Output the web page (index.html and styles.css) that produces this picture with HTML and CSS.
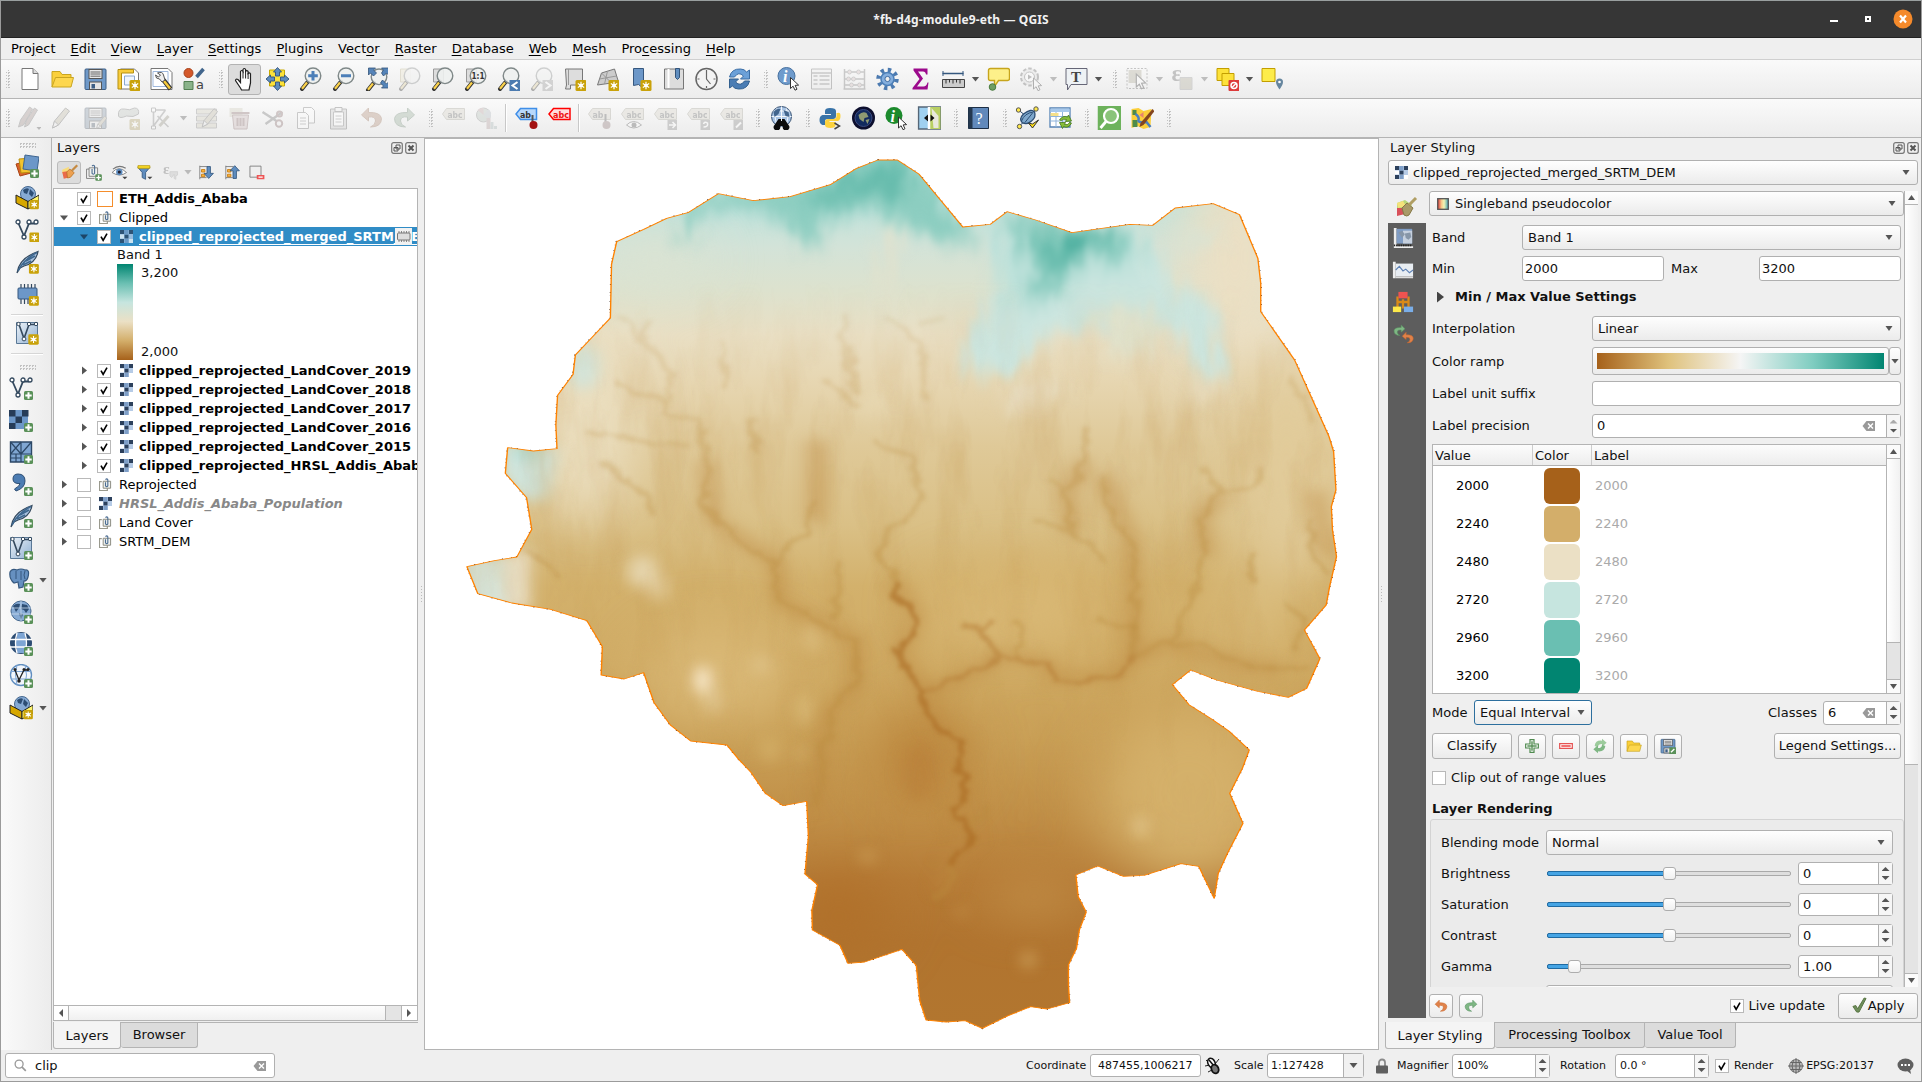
FILE: index.html
```html
<!DOCTYPE html>
<html lang="en">
<head>
<meta charset="utf-8">
<title>*fb-d4g-module9-eth — QGIS</title>
<link rel="stylesheet" href="styles.css">
</head>
<body>
<svg class="defs" width="0" height="0">
  <defs>
    <linearGradient id="blueG" x1="0" y1="0" x2="1" y2="1"><stop offset="0" stop-color="#eef3f8"/><stop offset="1" stop-color="#8fb0d3"/></linearGradient>
    <linearGradient id="spec" x1="0" x2="1"><stop offset="0" stop-color="#d7383b"/><stop offset=".35" stop-color="#f8c88a"/><stop offset=".6" stop-color="#f4f6b4"/><stop offset="1" stop-color="#3f9fb5"/></linearGradient>
    <g id="star"><rect width="11" height="11" rx="1.5" fill="#c9a20a"/><path d="M5.5 1.8v7.4M2.3 3.6l6.4 3.8M8.7 3.6L2.3 7.4" stroke="#fff" stroke-width="1.2"/><circle cx="5.5" cy="5.5" r="1.8" fill="#fff"/></g>
    <g id="plus"><rect width="9" height="9" rx="1.5" fill="#5a9159"/><path d="M4.5 1.3v6.4M1.3 4.500h6.400" stroke="#fff" stroke-width="2"/></g>
    <g id="lens"><path d="M9.500 14.500L3.500 22" stroke="#333" stroke-width="4" stroke-linecap="round"/><path d="M8.500 15.500L3.500 21.700" stroke="#fbd24c" stroke-width="2.200"/><circle cx="14.500" cy="8.800" r="7.800" fill="#eef1f0" fill-opacity=".9" stroke="#7f8888" stroke-width="1.400"/></g>
    <g id="cursor"><path d="M0 0l0 11 2.600-2.300 1.900 4 2-1-1.900-3.800 3.500-.300z" fill="#fff" stroke="#333" stroke-width="1"/></g>
    <g id="globe"><circle cx="11" cy="11" r="10" fill="#86aad4" stroke="#45688f"/><path d="M3 6q3-3 7-2l-1 4-3 4zM12 4l5 1 2 4-3 4-2-3-3-1zM9 13l4 1-2 6z" fill="#2d4e74"/></g>
    <g id="lbl"><path d="M1 8l4-5.500h18v11H5z" fill="#d9d3b4" stroke="#a8a285"/></g>
    <g id="vee"><path d="M3.500 5.500L9 18 14 5.500h6" fill="none" stroke="#34495e" stroke-width="1.800"/><g fill="#fff" stroke="#34495e" stroke-width="1.300"><circle cx="3" cy="4" r="2"/><circle cx="9" cy="19" r="2"/><circle cx="14" cy="4" r="2"/><circle cx="21" cy="4" r="2"/></g></g>
    <g id="hand"><path d="M8 21L3 13.500q0-2 2.500-1l2.500 3V4.500q1.300-2 2.500 0V2.500q1.300-2 2.600 0v2q1.200-1.600 2.500 0v2q1.200-1.300 2.400.300V16l-1.500 7H9z" fill="#fff" stroke="#222" stroke-width="1.200"/><path d="M10.500 4.500v7M13.100 4.500v7M15.600 6v6" stroke="#222"/></g>
    <g id="boxglobe"><circle cx="13" cy="8" r="7.500" fill="#86aad4" stroke="#45688f"/><path d="M8 4q4-3 6-1l-2 5-3-1zM15 3l4 4-2 4-3-3z" fill="#2d4e74"/><path d="M1 9l12 6.500V23L1 17z" fill="#d7a800" stroke="#222"/><path d="M13 15.500L24 9v8l-11 6z" fill="#fdf46a" stroke="#222"/></g>
    <g id="feather"><path d="M2 23Q4 8 23 1.500 21 13 9 16L5 18 2 23" fill="#a9c2df" stroke="#34495e" stroke-width="1.200"/><path d="M3 21Q9 9 22 2.500M8 15L16 11M11 11l9-5" fill="none" stroke="#3f688f" stroke-width="1.600"/></g>
    <g id="undo"><path d="M9 2L2 9l7 6v-4q7-1 7 4 0 4-5 6 11 0 11-8.500Q21 6 9 6.500z" fill="#e0824a" stroke="#c9672c"/></g>
    <g id="redo"><path d="M15 2l7 7-7 6v-4q-7-1-7 4 0 4 5 6Q2 21 2 12.500 3 6 15 6.500z" fill="#7fb784" stroke="#569060"/></g>
    <g id="pencil"><path d="M2 22l2-7L15 2l4 3L8 19z" fill="#c8b98a" stroke="#666"/><path d="M2 22l2-7 4 4z" fill="#eee" stroke="#666"/></g>
    <g id="folder"><path d="M1.500 20V4.500h8l2 3h9v3.500" fill="#fbd03b" stroke="#c9a520"/><path d="M1.500 20L5 10.500h18L20.500 20z" fill="#fdd74f" stroke="#c9a520"/></g>
    <g id="disk"><rect x="1.500" y="2" width="21" height="20.500" rx="1" fill="#6f99c8" stroke="#3d5f86"/><rect x="5.500" y="2.500" width="13" height="9" fill="#e8e8e8" stroke="#555"/><path d="M7 5h10M7 7h10M7 9.200h10" stroke="#666"/><rect x="6" y="15" width="12" height="7.500" fill="#e5e5e5" stroke="#555"/><rect x="8" y="17" width="3.500" height="4.500" fill="#3d5f86"/></g>
    <g id="rast"><path fill="#b6cbe6" d="M0 0h13v13H0z"/><path fill="#2c405c" d="M0 0h4v4H0zM9 0h4v4H9zM4.500 4.500h4v4h-4zM0 9h4v4H0z"/><path fill="#fff" d="M0 4.500h4v4H0zM9 9h4v4H9z"/><path fill="#7f9fc8" d="M4 0h4.500v4.500H4zM4.500 9h4v4h-4z"/></g>
    <g id="grp"><path d="M3 4H.5v9.500H9V11" fill="none" stroke="#9a9a8e" stroke-width="1.300"/><path d="M4.500 3.500h8V11h-8z" fill="#eff1ee" stroke="#85857a"/><path d="M7 4.500v4q1.500 1.600 2.500 0V1.800Q8.500.200 7 1.800" fill="none" stroke="#4c6d92" stroke-width="1.200"/></g>
    <symbol id="i-new" viewBox="0 0 24 24"><path d="M4.500 1.500h11l5 5v16h-16z" fill="#fff" stroke="#777"/><path d="M15.500 1.500v5h5" fill="#ddd" stroke="#777"/></symbol>
    <symbol id="i-open" viewBox="0 0 24 24"><use href="#folder"/></symbol>
    <symbol id="i-save" viewBox="0 0 24 24"><use href="#disk"/></symbol>
    <symbol id="i-layout" viewBox="0 0 24 24"><path d="M4 2h14l4 4v16H4z" fill="#fff" stroke="#777"/><path d="M1.500 2.500H17V6H5v16H1.500z" fill="#f8cc3c" stroke="#b38f12"/><path d="M8 9h10v9H8z" fill="#eef5ff" stroke="#8ba8d0"/><use href="#star" x="13" y="13"/></symbol>
    <symbol id="i-mgr" viewBox="0 0 24 24"><path d="M1.500 1.500h17l4 4v17h-21z" fill="#fff" stroke="#777"/><path d="M3.500 4.500h15v15h-15z" fill="none" stroke="#9fb8dc"/><path d="M14 13l7 9" stroke="#333" stroke-width="4.500"/><path d="M14.500 14l6 7.500" stroke="#f8cc3c" stroke-width="2.500"/><path d="M8 6q5-2 6 2l1.500 5-3 2-2.500-3q-4 0-4-4l3 2 2-2z" fill="#eee" stroke="#555"/></symbol>
    <symbol id="i-style" viewBox="0 0 24 24"><circle cx="6" cy="6" r="4.500" fill="#d4582a" stroke="#a8421b"/><path d="M14 10l7-8" stroke="#41658c" stroke-width="3.500"/><path d="M1.500 14.500h9v8h-9z" fill="#8ab38a" stroke="#527f52"/><text x="13.500" y="22" font-size="13" fill="#444">a</text></symbol>
    <symbol id="i-hand" viewBox="0 0 24 24"><use href="#hand"/></symbol>
    <symbol id="i-pan" viewBox="0 0 24 24"><path d="M4 3h15v16H4z" fill="#fde23a" stroke="#c7a900"/><path d="M12 .5L16 5h-2v4h-4V5H8zM12 23.500L8 19h2v-4h4v4h2zM.5 12L5 8v2h4v4H5v2zM23.500 12L19 16v-2h-4v-4h4V8z" fill="#5f8dbf" stroke="#33547a" stroke-width=".9"/></symbol>
    <symbol id="i-zin" viewBox="0 0 24 24"><use href="#lens"/><path d="M14.500 4v9.600M9.700 8.800h9.600" stroke="#4c7fb8" stroke-width="3"/></symbol>
    <symbol id="i-zout" viewBox="0 0 24 24"><use href="#lens"/><path d="M9.500 8.800h10" stroke="#4c7fb8" stroke-width="3"/></symbol>
    <symbol id="i-zfull" viewBox="0 0 24 24"><use href="#lens" transform="translate(0 1)"/><path d="M4 1h7L9 3l3 3-3 3-3-3-2 2zM24 1h-7l2 2-2 3 2 3 3-3 2 2zM24 21h-7l2-2-3-3 2-3 4 4 2-2z" fill="#5584b8" stroke="#33547a" stroke-width=".8"/></symbol>
    <symbol id="i-zsel" viewBox="0 0 24 24"><path d="M3 2h10v13H3z" fill="#f3e4a4" stroke="#cab45c"/><use href="#lens"/></symbol>
    <symbol id="i-zlay" viewBox="0 0 24 24"><path d="M3 2h10v13H3z" fill="#ddd" stroke="#999"/><use href="#lens"/></symbol>
    <symbol id="i-z11" viewBox="0 0 24 24"><path d="M3 2h10v13H3z" fill="#ddd" stroke="#999"/><use href="#lens"/><text x="8" y="12" font-size="9" font-weight="bold" textLength="13" lengthAdjust="spacingAndGlyphs" fill="#333">1:1</text></symbol>
    <symbol id="i-zlast" viewBox="0 0 24 24"><use href="#lens"/><path d="M13 13h11v11H13z" fill="#4c7bb0"/><path d="M21 15l-5 3.500 5 3.500" fill="none" stroke="#fff" stroke-width="2"/></symbol>
    <symbol id="i-znext" viewBox="0 0 24 24"><use href="#lens"/><path d="M13 13h11v11H13z" fill="#999"/><path d="M16 15l5 3.500-5 3.500" fill="none" stroke="#fff" stroke-width="2"/></symbol>
    <symbol id="i-map" viewBox="0 0 24 24"><path d="M3 2h17v16H8v4H3l1-4z" fill="#ddd" stroke="#777"/><path d="M6 2v16" stroke="#999"/><use href="#star" x="13" y="13"/></symbol>
    <symbol id="i-3d" viewBox="0 0 24 24"><path d="M6 6l13-4 4 13-21 3z" fill="#ccc" stroke="#777"/><path d="M12 4L9 17M4 12l17-3M6 6l11 11" stroke="#999" fill="none"/><use href="#star" x="13" y="13"/></symbol>
    <symbol id="i-bm" viewBox="0 0 24 24"><path d="M5 1.500h10v20l-5-4-5 1z" fill="#6c97c8" stroke="#36577e"/><use href="#star" x="12" y="13"/></symbol>
    <symbol id="i-bms" viewBox="0 0 24 24"><path d="M3 2h19v20H3z" fill="#ddd" stroke="#777"/><path d="M7 2v19" stroke="#fff" stroke-width="2"/><path d="M14 1.500h4v9l-2 2-2-2z" fill="#5f8dbf" stroke="#33547a"/></symbol>
    <symbol id="i-clock" viewBox="0 0 24 24"><circle cx="12" cy="12" r="10.500" fill="#f3f3f3" stroke="#666" stroke-width="1.500"/><path d="M12 4v8l4 5M12 3v2M12 19v2M3 12h2M19 12h2" fill="none" stroke="#666" stroke-width="1.200"/></symbol>
    <symbol id="i-ref" viewBox="0 0 24 24"><path d="M2 10Q4 1.500 13 2q4 0 6 3l3-2v9h-9l3-3q-5-5-9 1z" fill="#6ba0d8" stroke="#3c6ea5"/><path d="M22 14q-2 8.500-11 8-4 0-6-3l-3 2v-9h9l-3 3q5 5 9-1z" fill="#4b7db4" stroke="#33608f"/></symbol>
    <symbol id="i-info" viewBox="0 0 24 24"><circle cx="10" cy="9" r="8.500" fill="#6f9bcc" stroke="#47719f"/><text x="6.500" y="15" font-size="16" font-style="italic" font-weight="bold" font-family="Liberation Serif,serif" fill="#fff">i</text><use href="#cursor" x="14" y="10.500"/></symbol>
    <symbol id="i-tab" viewBox="0 0 24 24"><path d="M2 2h20v20H2z" fill="#eee" stroke="#666"/><path d="M2 6h20M4 9h4M10 9h10M4 13h4M10 13h10M4 17h4M10 17h10" stroke="#777" stroke-width="1.500"/></symbol>
    <symbol id="i-aba" viewBox="0 0 24 24"><path d="M2 22V2M22 2v20M1 22h22M2 5h20M2 12h20M2 18h20" stroke="#777" stroke-width="1.500"/><g fill="#e9b6b6" stroke="#888"><circle cx="7" cy="5" r="2"/><circle cx="16" cy="5" r="2"/><circle cx="6" cy="12" r="2"/><circle cx="11" cy="12" r="2"/><circle cx="9" cy="18" r="2"/><circle cx="17" cy="18" r="2"/></g></symbol>
    <symbol id="i-gear" viewBox="0 0 24 24"><circle cx="12" cy="12" r="9" fill="none" stroke="#4c7ab0" stroke-width="4.500" stroke-dasharray="3.300 3.770"/><circle cx="12" cy="12" r="6.500" fill="#84aedd" stroke="#4c7fb8" stroke-width="1.500"/><circle cx="12" cy="12" r="2.600" fill="#eee" stroke="#3f6ca3"/></symbol>
    <symbol id="i-sum" viewBox="0 0 24 24"><path d="M5 1.500h14v6h-1.500q-.5-3-3-3h-5l5 7-6 8h6.500q3 0 4-4H20l-1 7H4v-1.500l7-9-6-8.500z" fill="#9c0a8c"/></symbol>
    <symbol id="i-rul" viewBox="0 0 24 24"><path d="M1 6.500h21" stroke="#34577e" stroke-width="1.600"/><path d="M1.500 4v5M21.500 4v5" stroke="#34577e"/><path d="M1 12.500h22v8H1z" fill="#ccc" stroke="#444"/><path d="M4.500 12.500v4M8 12.500v3M11.500 12.500v4M15 12.500v3M18.500 12.500v4" stroke="#333"/></symbol>
    <symbol id="i-tip" viewBox="0 0 24 24"><path d="M4 1.500h17q2 0 2 2v8q0 2-2 2h-9l-4 6v-6H4q-2 0-2-2v-8q0-2 2-2z" fill="#fdf08a" stroke="#c7a51c" stroke-width="1.400"/><circle cx="6" cy="20" r="3.300" fill="#6e9d62" stroke="#497a3f"/></symbol>
    <symbol id="i-act" viewBox="0 0 24 24"><circle cx="10" cy="10" r="8.500" fill="#ddd" stroke="#666" stroke-width="2" stroke-dasharray="3.500 2"/><circle cx="10" cy="10" r="5" fill="#fff" stroke="#666"/><path d="M8.500 7.500v5l4-2.500z" fill="#555"/><use href="#cursor" x="14" y="11"/></symbol>
    <symbol id="i-txt" viewBox="0 0 24 24"><path d="M1.500 1.500h21v16h-16L3 23v-5.500H1.500z" fill="#eef2f5" stroke="#667"/><text x="6.500" y="15" font-size="15" font-family="Liberation Serif,serif" font-weight="bold" fill="#444">T</text></symbol>
    <symbol id="i-sel" viewBox="0 0 24 24"><path d="M1.500 1.500h20v20h-20z" fill="none" stroke="#666" stroke-dasharray="2 1.500"/><path d="M3 3h13v13H3z" fill="#b5ab7c"/><use href="#cursor" x="12" y="8" transform="translate(-3 -2) scale(1.150)"/></symbol>
    <symbol id="i-eps" viewBox="0 0 24 24"><text x="1" y="14" font-size="24" font-weight="bold" font-family="Liberation Serif,serif" fill="#666">ε</text><path d="M9.500 10.500h12v12h-12z" fill="#b5ab7c" stroke="#999"/></symbol>
    <symbol id="i-des" viewBox="0 0 24 24"><g fill="#fde23a" stroke="#c39e00"><path d="M1.500 1.500h12v12h-12z"/><path d="M6.500 6.500h12v12h-12z"/></g><rect x="13" y="13" width="11" height="11" rx="1" fill="#dd3b3b"/><circle cx="18.500" cy="18.500" r="3" fill="none" stroke="#fff" stroke-width="1.500"/><path d="M16.500 20.500l4-4" stroke="#fff" stroke-width="1.500"/></symbol>
    <symbol id="i-loc" viewBox="0 0 24 24"><path d="M1.500 1.500h13v13h-13z" fill="#fdec4b" stroke="#c39e00"/><path d="M19 22.500q-3.500-5-3.500-7.500a3.500 3.500 0 017 0q0 2.500-3.500 7.500z" fill="#66869f"/><circle cx="19" cy="15" r="1.300" fill="#fff"/></symbol>
    <symbol id="i-pens" viewBox="0 0 24 24"><path d="M1 21l2-7L12 1l3 2L6 19zM7 21l2-7L17 2l3 2-9 15z" fill="#b58a80" stroke="#777"/><path d="M19 21h5l-2.500 3z" fill="#555"/></symbol>
    <symbol id="i-pen" viewBox="0 0 24 24"><use href="#pencil"/></symbol>
    <symbol id="i-sed" viewBox="0 0 24 24"><use href="#disk"/><use href="#pencil" transform="translate(12 9) scale(.6)"/></symbol>
    <symbol id="i-poly" viewBox="0 0 24 24"><path d="M2 10q-1-8 6-7 5 2 10-1 5 0 4 6-5 4-12 2-7 3-8 0z" fill="#b8c8b8" stroke="#777"/><use href="#star" x="13" y="13"/></symbol>
    <symbol id="i-vert" viewBox="0 0 24 24"><path d="M4 22V4M4 4h12M4 20L16 4M8 10l11 11" stroke="#888" stroke-width="1.600"/><path d="M2 2h4v4H2zM2 20h4v3H2z" fill="#fff" stroke="#777"/><path d="M10 20l9-10" stroke="#9b9470" stroke-width="3"/></symbol>
    <symbol id="i-att" viewBox="0 0 24 24"><path d="M2 3h20v5H2zM2 10h20v5H2zM2 17h20v5H2z" fill="#d6cfa5" stroke="#888"/><use href="#pencil" transform="translate(6 1) scale(.9)"/></symbol>
    <symbol id="i-trash" viewBox="0 0 24 24"><path d="M2 2h13v9H2z" fill="#d6cfa5"/><path d="M5 9h16l-1.500 14h-13z" fill="#e3b4b4" stroke="#a66"/><path d="M4 7h18M10 12v8M13 12v8M16 12v8" stroke="#a66" stroke-width="2"/></symbol>
    <symbol id="i-cut" viewBox="0 0 24 24"><path d="M2 6l14 9M5 18L22 6" stroke="#777" stroke-width="2.500"/><circle cx="18.500" cy="17.500" r="3.200" fill="none" stroke="#a66" stroke-width="2"/><circle cx="19" cy="8" r="2.500" fill="none" stroke="#a66" stroke-width="2"/></symbol>
    <symbol id="i-copy" viewBox="0 0 24 24"><path d="M10 1.500h8l3 3V17H10z" fill="#fff" stroke="#777"/><path d="M4 6.500h8l3 3V22.500H4z" fill="#fff" stroke="#777"/><path d="M6.500 12h6M6.500 15h6M6.500 18h6" stroke="#888"/></symbol>
    <symbol id="i-paste" viewBox="0 0 24 24"><path d="M4 3h16v20H4z" fill="#ccc" stroke="#666"/><path d="M7 6h10v14H7z" fill="#fff" stroke="#777"/><path d="M9 10h6M9 13h6M9 16h6" stroke="#888"/><path d="M8.500 1.500h7v4h-7z" fill="#eee" stroke="#666"/></symbol>
    <symbol id="i-undo" viewBox="0 0 24 24"><use href="#undo"/></symbol>
    <symbol id="i-redo" viewBox="0 0 24 24"><use href="#redo"/></symbol>
    <symbol id="i-lab" viewBox="0 0 24 24"><use href="#lbl"/><text x="6" y="12" font-size="9" font-weight="bold" textLength="15" lengthAdjust="spacingAndGlyphs" fill="#666">abc</text></symbol>
    <symbol id="i-dia" viewBox="0 0 24 24"><circle cx="9" cy="9" r="7" fill="#a9c5b0" stroke="#888"/><path d="M9 9L3 4a7 7 0 016-2z" fill="#d99"/><path d="M9 9l5-6a7 7 0 011 10z" fill="#abc"/><path d="M12 12h4v11h-4z" fill="#c99"/><path d="M16 16h3v7h-3zM19.500 20h3v3h-3z" fill="#9bb"/></symbol>
    <symbol id="i-lpin" viewBox="0 0 24 24"><path d="M1.500 8L6 2.500h16v11H6z" fill="#b8d8fb" stroke="#3f8ee8" stroke-width="1.500"/><text x="5.500" y="12" font-size="9.500" font-weight="bold" textLength="11" lengthAdjust="spacingAndGlyphs" fill="#333">ab</text><path d="M18 9v7" stroke="#555" stroke-width="2"/><circle cx="19" cy="19" r="4" fill="#a31212"/></symbol>
    <symbol id="i-lred" viewBox="0 0 24 24"><path d="M1.500 8L6 2.500h16.500v11H6z" fill="#fdd" stroke="#f00" stroke-width="1.500"/><text x="5.500" y="12" font-size="9.500" font-weight="bold" textLength="16" lengthAdjust="spacingAndGlyphs" fill="#e11">abc</text></symbol>
    <symbol id="i-lpg" viewBox="0 0 24 24"><use href="#lbl"/><text x="5" y="12" font-size="9" font-weight="bold" textLength="11" lengthAdjust="spacingAndGlyphs" fill="#666">ab</text><path d="M18 8v8" stroke="#555" stroke-width="2"/><circle cx="19" cy="19" r="4" fill="#a87070"/></symbol>
    <symbol id="i-leye" viewBox="0 0 24 24"><use href="#lbl"/><text x="6" y="12" font-size="9" font-weight="bold" textLength="15" lengthAdjust="spacingAndGlyphs" fill="#666">abc</text><path d="M6 19q7-7 15 0-8 6-15 0z" fill="#fff" stroke="#555"/><circle cx="13.500" cy="19" r="2.500" fill="#555"/></symbol>
    <symbol id="i-lmov" viewBox="0 0 24 24"><use href="#lbl"/><text x="6" y="12" font-size="9" font-weight="bold" textLength="15" lengthAdjust="spacingAndGlyphs" fill="#666">abc</text><path d="M14 14h10v10H14z" fill="#888"/><path d="M15.500 19h6M19 16l3 3-3 3" stroke="#fff" stroke-width="1.500" fill="none"/></symbol>
    <symbol id="i-lrot" viewBox="0 0 24 24"><use href="#lbl"/><text x="6" y="12" font-size="9" font-weight="bold" textLength="15" lengthAdjust="spacingAndGlyphs" fill="#666">abc</text><path d="M14 14h10v10H14z" fill="#888"/><path d="M17 21q5 0 4-4-3-2-4 1" stroke="#fff" stroke-width="1.500" fill="none"/></symbol>
    <symbol id="i-ledt" viewBox="0 0 24 24"><use href="#lbl"/><text x="6" y="12" font-size="9" font-weight="bold" textLength="15" lengthAdjust="spacingAndGlyphs" fill="#666">abc</text><path d="M14 14h10v10H14z" fill="#888"/><path d="M16.500 21.500l5-5" stroke="#fff" stroke-width="2"/></symbol>
    <symbol id="i-msrch" viewBox="0 0 24 24"><circle cx="12" cy="10.500" r="10" fill="#a9c4e4" stroke="#344f70"/><path d="M12 .5v20M2 10.500h20M4 5h16M7 2.500q-3 8 0 16M17 2.500q3 8 0 16" stroke="#f3f7fc" fill="none"/><path d="M4 6q3-4 7-3l-2 5-4 3zM14 4l5 2 1 5-4-1z" fill="#42658d"/><path d="M9 13h2.500v2h1V13H15l4 6a3.300 3.300 0 11-5.500 1h-3a3.300 3.300 0 11-5.500-1z" fill="#0b0b0b"/></symbol>
    <symbol id="i-py" viewBox="0 0 24 24"><path d="M11.500 2q-5 0-5 3v3h6v1H4q-3 1-3 5t3 5h2.500v-4q0-2 3-2h5q3 0 3-3V5q0-3-6-3z" fill="#3973a8"/><path d="M12 22q5 0 5-3v-3h-6v-1h8.500q2.500-1 2.500-5t-3-3h-1v3q0 3-3 3h-5q-3.500 0-3.500 3v3q0 3 5.500 3z" fill="#fcd23e"/><path d="M16 17l5 3-5 3" fill="none" stroke="#444" stroke-width="1.500"/></symbol>
    <symbol id="i-earth" viewBox="0 0 24 24"><circle cx="12" cy="12" r="11.500" fill="#0d0f2e"/><circle cx="12" cy="12" r="8.500" fill="#122a5e" stroke="#3b4a80"/><path d="M7 9q4-4 8-2l2 4-4 1-1 4-4-3zM14 14l4-1-2 5z" fill="#8f9a72"/></symbol>
    <symbol id="i-ginf" viewBox="0 0 24 24"><circle cx="9.500" cy="9.500" r="8.500" fill="#1c8a2c"/><text x="6" y="15.500" font-size="16" font-style="italic" font-weight="bold" font-family="Liberation Serif,serif" fill="#fff">i</text><use href="#cursor" x="14" y="11"/></symbol>
    <symbol id="i-swipe" viewBox="0 0 24 24"><path d="M1 1h22v22H1z" fill="#9fd0f0" stroke="#567" stroke-width="1.500"/><path d="M12 1h11v22H12z" fill="#b8cf63"/><path d="M14 2l7 8v12h-5z" fill="#e8e8dc"/><path d="M11.500 1v22" stroke="#fff" stroke-width="2.500"/><path d="M10.500 8.500v7L6.500 12zM13 8.500v7l4-3.500z" fill="#111"/></symbol>
    <symbol id="i-help" viewBox="0 0 24 24"><path d="M2 1.500h20v21H2z" fill="#6189bb" stroke="#1d2f45"/><path d="M2 1.500h4v21H2z" fill="#24384f"/><text x="9" y="18" font-size="16" font-family="Liberation Serif,serif" fill="#fff">?</text></symbol>
    <symbol id="i-topo" viewBox="0 0 24 24"><path d="M8 8q8-6 11-2 2 5-3 9-4 4-9 2-4-4 1-9z" fill="#7ea7cc" stroke="#2d4e74" stroke-width="1.300"/><path d="M6 15q3-8 12-9M9 17l8-10M3 4l5 4M20 3l-2 3M4 20l4-4" stroke="#2d4e74" fill="none"/><g fill="#ffe84a" stroke="#555"><circle cx="3" cy="4" r="2.200"/><circle cx="20.500" cy="3" r="2.200"/><circle cx="4" cy="20.500" r="2.200"/></g><path d="M13 17l4 5 6-8-6 4z" fill="#ffe01a" stroke="#333"/></symbol>
    <symbol id="i-tref" viewBox="0 0 24 24"><path d="M1.500 2h20v19h-20z" fill="#fff" stroke="#5583b5" stroke-width="1.300"/><path d="M2 2.500h19V6H2z" fill="#a8c9ec"/><path d="M2 10.500h19M2 15h19M7.500 6v15M14 6v15" stroke="#8fb4dc"/><path d="M2 7h8v3H2z" fill="#f5e08a"/><path d="M11 14q3-5 8-3l1-2 3 6-6 .500 1-2q-3-1-5 1zM23 17q-3 6-8 3.500l-1 2-3-6h6l-1 2q4 1 5-2z" fill="#86bd3a" stroke="#44771b" stroke-width=".8"/></symbol>
    <symbol id="i-osm" viewBox="0 0 24 24"><path d="M0 0h24v24H0z" fill="#6db25c"/><circle cx="13.500" cy="10" r="7" fill="#8ac47a" stroke="#fff" stroke-width="2.200"/><path d="M8.500 15.500L3 22" stroke="#fff" stroke-width="2.800"/></symbol>
    <symbol id="i-osmd" viewBox="0 0 24 24"><path d="M1 3l7-1 5 3 8-2-1 18-7 2-6-3-6 2z" fill="#fbcf3a"/><path d="M2 4h4v5H2zM2 14h5v7H2z" fill="#4d8b4a"/><path d="M5 8q4 3 3 6t8 2l4 5" stroke="#4a7fc1" stroke-width="2.500" fill="none"/><path d="M9 9l4-3v6z" fill="#e8836f"/><path d="M10 17L22 3l2 2-11 14-4 2z" fill="#84461f"/></symbol>
    <symbol id="i-dsm" viewBox="0 0 24 24"><path d="M1 10l12-3 3 12-11 3z" fill="#d9622a" stroke="#a84414"/><path d="M4 5l13-1 1 14-12 1z" fill="#f3c32e" stroke="#b98e0e"/><path d="M10 1l14 2-2 14-14-2z" fill="#6c97c8" stroke="#3f658f"/><use href="#plus" x="15" y="15"/></symbol>
    <symbol id="i-gpk" viewBox="0 0 24 24"><use href="#boxglobe"/><use href="#star" x="14.500" y="14" transform="translate(2.200 2) scale(.85)"/></symbol>
    <symbol id="i-vnew" viewBox="0 0 24 24"><use href="#vee"/><use href="#star" x="15" y="15" transform="scale(.9) translate(1 1)"/></symbol>
    <symbol id="i-fnew" viewBox="0 0 24 24"><use href="#feather"/><use href="#star" x="15" y="15" transform="scale(.9) translate(.5 .5)"/></symbol>
    <symbol id="i-mem" viewBox="0 0 24 24"><path d="M6 2v20M9.500 2v20M13 2v20M16.500 2v20M20 2v20" stroke="#34495e" stroke-width="1.200"/><rect x="3" y="6" width="19" height="11" rx="1" fill="#6c97c8" stroke="#34577e"/><use href="#star" x="15" y="15" transform="scale(.9) translate(.5 .5)"/></symbol>
    <symbol id="i-virt" viewBox="0 0 24 24"><path d="M1.500 1.500h21v21h-21z" fill="url(#blueG)" stroke="#5a7896"/><path d="M4 3.500L9 17.500 14 3.500h7" fill="none" stroke="#34495e" stroke-width="1.600"/><g fill="#fff" stroke="#34495e"><circle cx="3.500" cy="3" r="1.700"/><circle cx="9" cy="18" r="1.900"/><circle cx="14" cy="3" r="1.700"/><circle cx="21" cy="3" r="1.700"/></g><use href="#star" x="14" y="14" transform="scale(.95)"/></symbol>
    <symbol id="i-virp" viewBox="0 0 24 24"><path d="M1.500 1.500h21v21h-21z" fill="url(#blueG)" stroke="#5a7896"/><path d="M4 3.500L9 17.500 14 3.500h7" fill="none" stroke="#34495e" stroke-width="1.600"/><g fill="#fff" stroke="#34495e"><circle cx="3.500" cy="3" r="1.700"/><circle cx="9" cy="18" r="1.900"/><circle cx="14" cy="3" r="1.700"/><circle cx="21" cy="3" r="1.700"/></g><use href="#plus" x="15" y="15"/></symbol>
    <symbol id="i-vadd" viewBox="0 0 24 24"><use href="#vee"/><use href="#plus" x="15" y="15"/></symbol>
    <symbol id="i-radd" viewBox="0 0 24 24"><path d="M0 2h19v19H0z" fill="#6c97c8"/><path d="M0 2h6.500v6.500H0zM13 2h6.500v6.500H13zM6.500 8.500H13V15H6.500zM0 15h6.500v6H0z" fill="#263c58"/><use href="#plus" x="15" y="15"/></symbol>
    <symbol id="i-mesh" viewBox="0 0 24 24"><path d="M1.500 2h21v20h-21z" fill="#7fa6d2" stroke="#2c4766" stroke-width="1.400"/><path d="M1.500 14h21M12 2v20M1.500 2L12 14M12 2L1.500 14M22.500 2L12 14M7 14v8M2 18h10" stroke="#2c4766" stroke-width="1.200" fill="none"/><use href="#plus" x="15" y="15"/></symbol>
    <symbol id="i-csv" viewBox="0 0 24 24"><path d="M9 2q7 0 7 7 0 7-9 10l-1.500-2Q11 14 11 11.500 4 12 4 7t5-5z" fill="#4c7cb2" stroke="#2d4e74"/><use href="#plus" x="15" y="15"/></symbol>
    <symbol id="i-fadd" viewBox="0 0 24 24"><use href="#feather"/><use href="#plus" x="15" y="15"/></symbol>
    <symbol id="i-pg" viewBox="0 0 24 24"><path d="M1 4q2-4 7-2 4-2 8 0 5-1 3 7-1 4-4 4l-1 6-4 1-1-6-4 1Q0 11 1 4z" fill="#6690c0" stroke="#34577e" stroke-width="1.200"/><path d="M7 3v8M12 3v9M16 3q-2 4 0 8" stroke="#34577e" fill="none"/><use href="#plus" x="15" y="15"/></symbol>
    <symbol id="i-gadd" viewBox="0 0 24 24"><use href="#globe" x="1"/><path d="M2 8h20M2 14h20M12 1v20" stroke="#c8daee" stroke-width=".8"/><use href="#plus" x="15" y="15"/></symbol>
    <symbol id="i-wcs" viewBox="0 0 24 24"><circle cx="12" cy="11" r="11" fill="#2c4c73"/><path d="M8 1h8v6H8zM7 7h10v8H7zM8 15h8v6H8z" fill="#7da5d4"/><path d="M1 7.500h22M1 15h22M8 1q-3 10 0 20M16 1q3 10 0 20" stroke="#fff" fill="none" stroke-width="1.300"/><use href="#plus" x="15" y="15"/></symbol>
    <symbol id="i-wfs" viewBox="0 0 24 24"><circle cx="12" cy="11" r="10.500" fill="#f2f6fb" stroke="#5f8dbf" stroke-width="1.300"/><path d="M2 7.500h20M2 15h20M8 1q-3 10 0 20M16 1q3 10 0 20" stroke="#7da5d4" fill="none"/><path d="M6 6l4 10 5-10h4" fill="none" stroke="#222" stroke-width="1.300"/><circle cx="6" cy="5.500" r="1.500" fill="#222"/><circle cx="10" cy="17" r="1.800" fill="#222"/><circle cx="15" cy="5.500" r="1.500" fill="#222"/><circle cx="19" cy="5.500" r="1.500" fill="#222"/><use href="#plus" x="15" y="15"/></symbol>
    <symbol id="i-brush" viewBox="0 0 24 24"><path d="M3 8l8-3 7 5-6 9-9 0z" fill="#b8d77a"/><path d="M3 8l6-2 3 5-8 2z" fill="#f5e27a"/><path d="M3 13l6 0 2 6-8 2z" fill="#d8505a"/><path d="M8 13l5-5 6 5-4 7q-2 2-5 0z" fill="#a99a68" stroke="#857846"/><path d="M15 10l7-7" stroke="#b09e63" stroke-width="3"/></symbol>
    <symbol id="i-brush2" viewBox="0 0 24 24"><path d="M3 9l9-4-1 7-8 2z" fill="#f9dc7a"/><path d="M3 12l7-1 3 8-8 2z" fill="#ea6b4b"/><path d="M9 12l4-4 6 5-5 6-4 1z" fill="#eda050" stroke="#b77023"/><path d="M16 10l7-7" stroke="#c58a42" stroke-width="3"/></symbol>
    <symbol id="i-gadd2" viewBox="0 0 20 20"><path d="M5 6H1.500v11H11" fill="none" stroke="#777"/><path d="M4.500 4.500h10v10h-10z" fill="#eff1ee" stroke="#777"/><path d="M8 6v5q2 2 3 0V2.500q-1.500-2-3 0" fill="none" stroke="#4c6d92" stroke-width="1.300"/><use href="#plus" x="11" y="12" transform="translate(2.500 2) scale(.85)"/></symbol>
    <symbol id="i-eye" viewBox="0 0 20 20"><path d="M1 10q8-9 17 0-8 6-17 0z" fill="#fff" stroke="#777"/><circle cx="9.500" cy="9.500" r="3.800" fill="#5f8dbf"/><circle cx="9.500" cy="9.500" r="1.800" fill="#223"/><path d="M2 6q7-6 15-1" fill="none" stroke="#777" stroke-width="1.400"/><path d="M13 15h6l-3 3z" fill="#444"/></symbol>
    <symbol id="i-filt" viewBox="0 0 20 20"><path d="M2 4h14l-5 6v8l-4-2v-6z" fill="#5f8dbf" stroke="#34577e"/><path d="M2 2h14v3H2z" fill="#fddf2a" stroke="#b99a0a"/><path d="M13 15h6l-3 3z" fill="#444"/></symbol>
    <symbol id="i-eflt" viewBox="0 0 20 20"><text x="1" y="12" font-size="18" font-weight="bold" font-family="Liberation Serif,serif" fill="#666">ε</text><path d="M9 9h9v4l-2 1v4l-2-1v-5l-3 4-2-2z" fill="#bbb" stroke="#999"/></symbol>
    <symbol id="i-exp" viewBox="0 0 20 20"><path d="M3 2v16M3 3h9M3 16h8" stroke="#777" fill="none"/><path d="M5 6.500h4v3H5zM5 12h4v3H5z" fill="#f9b13b" stroke="#c87b0e"/><path d="M11.500 3h4v8h3.500l-5.500 6L8 11h3.500z" fill="#5f8dbf" stroke="#34577e"/></symbol>
    <symbol id="i-col" viewBox="0 0 20 20"><path d="M3 2v16M3 3h9M3 16h8" stroke="#777" fill="none"/><path d="M5 6.500h4v3H5zM5 12h4v3H5z" fill="#f9b13b" stroke="#c87b0e"/><path d="M11.500 17h4V8h3.500l-5.500-6L8 8h3.500z" fill="#5f8dbf" stroke="#34577e"/></symbol>
    <symbol id="i-rem" viewBox="0 0 20 20"><path d="M2 2.500h13v13H2z" fill="#efefef" stroke="#777"/><path d="M10 13h9v5h-9z" fill="#e55"/><path d="M12 15.500h5" stroke="#fff" stroke-width="1.500"/></symbol>
    <symbol id="i-tr" viewBox="0 0 24 24"><path d="M2 1h3v20H2zM2 21h21v2H2z" fill="#eee"/><path d="M5 2h17v16H5z" fill="#7f9cc4"/><path d="M12 4h10v14H12z" fill="#c6d0de"/><path d="M7 6l4-2 3 4-3 4zM14 7l6-1 1 5-3 3-3-2z" fill="#8796a8"/><path d="M2 20h20" stroke="#222" stroke-width="2" stroke-dasharray="1.500 1"/></symbol>
    <symbol id="i-hist" viewBox="0 0 24 24"><path d="M1 3h3v18H1z" fill="#eee"/><path d="M4 5h19v14H4z" fill="#e8edf2"/><path d="M4 12l4-4 4 5 3-2 4 4 4-3" fill="none" stroke="#5f82b5" stroke-width="1.200"/><path d="M4 19h19v2H4z" fill="#ddd"/></symbol>
    <symbol id="i-pyr" viewBox="0 0 24 24"><path d="M12 9v10M6 6v12M18 6v12M6 12h12" stroke="#d98a17" stroke-width="2.500" fill="none"/><path d="M7 1h10v7H7z" fill="#ef5350"/><path d="M1 17h9v6H1z" fill="#fde94a"/><path d="M13 17h10v6H13z" fill="#7aaee8"/></symbol>
    <symbol id="i-hst" viewBox="0 0 24 24"><use href="#redo" transform="translate(1 1) scale(.6)"/><use href="#undo" transform="translate(10 9) scale(.6)"/></symbol>
    <symbol id="i-padd" viewBox="0 0 24 24"><path d="M9 2.500h6V9h6.500v6H15v6.500H9V15H2.500V9H9z" fill="#fff" stroke="#4f8a4f" stroke-width="1.800"/><path d="M12 5v14M5 12h14" stroke="#5a9159" stroke-width="2.200"/></symbol>
    <symbol id="i-pdel" viewBox="0 0 24 24"><path d="M2.500 8.500h19v7h-19z" fill="#fff" stroke="#e55353" stroke-width="1.800"/><path d="M5 12h14" stroke="#ef5656" stroke-width="2.500"/></symbol>
    <symbol id="i-inv" viewBox="0 0 24 24"><path d="M2 14Q3 5 13 6V3l7 6-7 6v-4q-6 0-6 5z" fill="#9ccb9c" transform="translate(2 -2)"/><path d="M22 10q-1 9-11 8v3l-7-6 7-6v4q6 0 6-5z" fill="#7fb784" transform="translate(-2 2)"/></symbol>
    <symbol id="i-sst" viewBox="0 0 24 24"><use href="#disk"/><path d="M14 14h10v10H14z" fill="#5a9159"/><path d="M16.500 21.500l5-5" stroke="#fff" stroke-width="2"/></symbol>
    <symbol id="rst" viewBox="0 0 13 13"><use href="#rast"/></symbol>
    <symbol id="gr" viewBox="0 0 14 14"><use href="#grp"/></symbol>
    <symbol id="fl" viewBox="0 0 12 12"><rect x=".7" y=".7" width="10.600" height="10.600" rx="2" fill="#efefef" stroke="#777" stroke-width="1.200"/><path d="M5 3h4v4H5zM3 5.500h4v3.500H3z" fill="#efefef" stroke="#555"/></symbol>
    <symbol id="cl" viewBox="0 0 12 12"><rect x=".7" y=".7" width="10.600" height="10.600" rx="2" fill="#efefef" stroke="#777" stroke-width="1.200"/><path d="M3.500 3.500l5 5M8.500 3.500l-5 5" stroke="#555" stroke-width="2"/></symbol>
    <symbol id="ck" viewBox="0 0 14 14"><path d="M3.500 6.500L6 11 10.500 3" fill="none" stroke="#000" stroke-width="1.900"/></symbol>
    <symbol id="clr" viewBox="0 0 14 12"><path d="M4.500 1H13v10H4.500L.5 6z" fill="#999"/><path d="M6 3.500l5 5M11 3.500l-5 5" stroke="#fff" stroke-width="1.400"/></symbol>
  </defs>
</svg>

<div class="window">
  <header class="titlebar">
    <span class="wtitle">*fb-d4g-module9-eth — QGIS</span>
    <span class="wbtns"><i class="wmin"></i><i class="wmax"></i><svg class="wclose" viewBox="0 0 20 20"><circle cx="10" cy="10" r="9.500" fill="#f58a2b"/><path d="M7 6.500l6 7M13 6.500l-6 7" stroke="#fff" stroke-width="2.200"/></svg></span>
  </header>
  <nav class="menu">
    <span>Pro<u>j</u>ect</span><span><u>E</u>dit</span><span><u>V</u>iew</span><span><u>L</u>ayer</span><span><u>S</u>ettings</span><span><u>P</u>lugins</span><span>Vect<u>o</u>r</span><span><u>R</u>aster</span><span><u>D</u>atabase</span><span><u>W</u>eb</span><span><u>M</u>esh</span><span>Pro<u>c</u>essing</span><span><u>H</u>elp</span>
  </nav>
  <div class="toolbar">
    <i class="grip first"></i>
    <svg class="t"><use href="#i-new"/></svg><svg class="t"><use href="#i-open"/></svg><svg class="t"><use href="#i-save"/></svg><svg class="t"><use href="#i-layout"/></svg><svg class="t"><use href="#i-mgr"/></svg><svg class="t"><use href="#i-style"/></svg>
    <i class="grip wider"></i>
    <span class="pressed"><svg class="t"><use href="#i-hand"/></svg></span><svg class="t"><use href="#i-pan"/></svg><svg class="t"><use href="#i-zin"/></svg><svg class="t"><use href="#i-zout"/></svg><svg class="t"><use href="#i-zfull"/></svg><svg class="t off"><use href="#i-zsel"/></svg><svg class="t"><use href="#i-zlay"/></svg><svg class="t"><use href="#i-z11"/></svg><svg class="t"><use href="#i-zlast"/></svg><svg class="t off"><use href="#i-znext"/></svg><svg class="t"><use href="#i-map"/></svg><svg class="t"><use href="#i-3d"/></svg><svg class="t"><use href="#i-bm"/></svg><svg class="t"><use href="#i-bms"/></svg><svg class="t"><use href="#i-clock"/></svg><svg class="t"><use href="#i-ref"/></svg>
    <i class="grip"></i>
    <svg class="t"><use href="#i-info"/></svg><svg class="t off"><use href="#i-tab"/></svg><svg class="t off"><use href="#i-aba"/></svg><svg class="t"><use href="#i-gear"/></svg><svg class="t"><use href="#i-sum"/></svg><svg class="t"><use href="#i-rul"/></svg><i class="drop"></i><svg class="t"><use href="#i-tip"/></svg><svg class="t off"><use href="#i-act"/></svg><i class="drop off"></i><svg class="t"><use href="#i-txt"/></svg><i class="drop"></i>
    <i class="grip"></i>
    <svg class="t off"><use href="#i-sel"/></svg><i class="drop off"></i><svg class="t off"><use href="#i-eps"/></svg><i class="drop off"></i><svg class="t"><use href="#i-des"/></svg><i class="drop"></i><svg class="t"><use href="#i-loc"/></svg>
  </div>
  <div class="toolbar second">
    <i class="grip first"></i>
    <svg class="t off"><use href="#i-pens"/></svg><svg class="t off"><use href="#i-pen"/></svg><svg class="t off"><use href="#i-sed"/></svg><svg class="t off"><use href="#i-poly"/></svg><svg class="t off"><use href="#i-vert"/></svg><i class="drop off"></i><svg class="t off"><use href="#i-att"/></svg><svg class="t off"><use href="#i-trash"/></svg><svg class="t off"><use href="#i-cut"/></svg><svg class="t off"><use href="#i-copy"/></svg><svg class="t off"><use href="#i-paste"/></svg><svg class="t off"><use href="#i-undo"/></svg><svg class="t off"><use href="#i-redo"/></svg>
    <i class="grip"></i>
    <svg class="t off"><use href="#i-lab"/></svg><svg class="t off"><use href="#i-dia"/></svg><i class="vsep"></i><svg class="t"><use href="#i-lpin"/></svg><svg class="t"><use href="#i-lred"/></svg><i class="vsep"></i><svg class="t off"><use href="#i-lpg"/></svg><svg class="t off"><use href="#i-leye"/></svg><svg class="t off"><use href="#i-lmov"/></svg><svg class="t off"><use href="#i-lrot"/></svg><svg class="t off"><use href="#i-ledt"/></svg>
    <i class="grip wider"></i><svg class="t"><use href="#i-msrch"/></svg>
    <i class="grip"></i><svg class="t"><use href="#i-py"/></svg><svg class="t"><use href="#i-earth"/></svg><svg class="t"><use href="#i-ginf"/></svg><svg class="t"><use href="#i-swipe"/></svg>
    <i class="grip"></i><svg class="t"><use href="#i-help"/></svg>
    <i class="grip"></i><svg class="t"><use href="#i-topo"/></svg><svg class="t"><use href="#i-tref"/></svg>
    <i class="grip"></i><svg class="t"><use href="#i-osm"/></svg><svg class="t"><use href="#i-osmd"/></svg>
    <i class="grip"></i>
  </div>

  <main class="body">
    <aside class="vbar">
      <i class="hgrip"></i>
      <div class="vgroup wide"><svg class="v"><use href="#i-dsm"/></svg><svg class="v"><use href="#i-gpk"/></svg><svg class="v"><use href="#i-vnew"/></svg><svg class="v"><use href="#i-fnew"/></svg><svg class="v"><use href="#i-mem"/></svg><i class="hsep"></i><svg class="v"><use href="#i-virt"/></svg><i class="hsep low"></i></div>
      <i class="hgrip"></i>
      <div class="vgroup"><svg class="v"><use href="#i-vadd"/></svg><svg class="v"><use href="#i-radd"/></svg><svg class="v"><use href="#i-mesh"/></svg><svg class="v"><use href="#i-csv"/></svg><svg class="v"><use href="#i-fadd"/></svg><svg class="v"><use href="#i-virp"/></svg><span class="vd"><svg class="v"><use href="#i-pg"/></svg><i class="drop"></i></span><svg class="v"><use href="#i-gadd"/></svg><svg class="v"><use href="#i-wcs"/></svg><svg class="v"><use href="#i-wfs"/></svg><span class="vd"><svg class="v"><use href="#i-gpk"/></svg><i class="drop"></i></span></div>
    </aside>

    <section class="layers">
      <div class="dtitle"><span>Layers</span><svg class="db"><use href="#fl"/></svg><svg class="db"><use href="#cl"/></svg></div>
      <div class="ltools"><span class="lpress"><svg class="l"><use href="#i-brush2"/></svg></span><svg class="l"><use href="#i-gadd2"/></svg><svg class="l"><use href="#i-eye"/></svg><svg class="l"><use href="#i-filt"/></svg><svg class="l off"><use href="#i-eflt"/></svg><i class="drop off"></i><svg class="l"><use href="#i-exp"/></svg><svg class="l"><use href="#i-col"/></svg><svg class="l"><use href="#i-rem"/></svg></div>
      <div class="tree">
        <div class="items">
          <div class="it"><i class="ar none"></i><svg class="cb"><use href="#ck"/></svg><i class="sw"></i><b>ETH_Addis_Ababa</b></div>
          <div class="it"><i class="ar down"></i><svg class="cb"><use href="#ck"/></svg><svg class="li"><use href="#gr"/></svg><span>Clipped</span></div>
          <div class="it sub selected"><i class="ar down"></i><svg class="cb"><use href="#ck"/></svg><svg class="li"><use href="#rst"/></svg><b>clipped_reprojected_merged_SRTM_DEM</b><svg class="chip" viewBox="0 0 17 17"><rect width="17" height="17" fill="#f2f2f2"/><path d="M4 3v11M6.500 3v11M9 3v11M11.500 3v11M14 3v11" stroke="#888"/><rect x="2.500" y="5" width="12.500" height="7" rx="1" fill="#ddd" stroke="#777"/></svg></div>
          <div class="band">Band 1</div>
          <div class="legend"><i></i><div><span>3,200</span><span>2,000</span></div></div>
          <div class="it sub"><i class="ar"></i><svg class="cb"><use href="#ck"/></svg><svg class="li"><use href="#rst"/></svg><b>clipped_reprojected_LandCover_2019</b></div>
          <div class="it sub"><i class="ar"></i><svg class="cb"><use href="#ck"/></svg><svg class="li"><use href="#rst"/></svg><b>clipped_reprojected_LandCover_2018</b></div>
          <div class="it sub"><i class="ar"></i><svg class="cb"><use href="#ck"/></svg><svg class="li"><use href="#rst"/></svg><b>clipped_reprojected_LandCover_2017</b></div>
          <div class="it sub"><i class="ar"></i><svg class="cb"><use href="#ck"/></svg><svg class="li"><use href="#rst"/></svg><b>clipped_reprojected_LandCover_2016</b></div>
          <div class="it sub"><i class="ar"></i><svg class="cb"><use href="#ck"/></svg><svg class="li"><use href="#rst"/></svg><b>clipped_reprojected_LandCover_2015</b></div>
          <div class="it sub"><i class="ar"></i><svg class="cb"><use href="#ck"/></svg><svg class="li"><use href="#rst"/></svg><b>clipped_reprojected_HRSL_Addis_Abab</b></div>
          <div class="it"><i class="ar"></i><svg class="cb"></svg><svg class="li"><use href="#gr"/></svg><span>Reprojected</span></div>
          <div class="it"><i class="ar"></i><svg class="cb"></svg><svg class="li"><use href="#rst"/></svg><b class="gone">HRSL_Addis_Ababa_Population</b></div>
          <div class="it"><i class="ar"></i><svg class="cb"></svg><svg class="li"><use href="#gr"/></svg><span>Land Cover</span></div>
          <div class="it"><i class="ar"></i><svg class="cb"></svg><svg class="li"><use href="#gr"/></svg><span>SRTM_DEM</span></div>
        </div>
        <div class="hscroll"><i class="hb left"></i><i class="hs"></i><i class="ht"></i><i class="hb right"></i></div>
      </div>
      <div class="tabs ltabs"><span class="tab on">Layers</span><span class="tab">Browser</span></div>
    </section>

    <div class="split"><i></i></div>

    <section class="canvas">
      <svg class="map" viewBox="0 0 953 910">
        <defs>
          <linearGradient id="relief" gradientUnits="userSpaceOnUse" x1="700" y1="60" x2="720" y2="2665">
            <stop offset="0" stop-color="#9cd5ca"/><stop offset=".06" stop-color="#c3e3dc"/><stop offset=".1" stop-color="#d3e3d8"/><stop offset=".15" stop-color="#dde2ce"/><stop offset=".2" stop-color="#e9dfc4"/><stop offset=".25" stop-color="#e7d7b3"/><stop offset=".33" stop-color="#dfc998"/><stop offset=".42" stop-color="#dac086"/><stop offset=".49" stop-color="#d3b16c"/><stop offset=".58" stop-color="#d0ab64"/><stop offset=".67" stop-color="#c99f56"/><stop offset=".76" stop-color="#c08e46"/><stop offset=".83" stop-color="#b67b36"/><stop offset=".9" stop-color="#b1742f"/><stop offset="1" stop-color="#b2762f"/>
          </linearGradient>
          <path id="edge" d="M728 60L762 60 800 103 876 261 924 253 953 215 1003 240 1066 278 1167 253 1207 256 1246 204 1312 191 1358 224 1390 355 1395 430 1395 515 1454 660 1492 805 1514 890 1522 935 1526 1050 1518 1100 1520 1170 1527 1250 1515 1340 1509 1395 1471 1470 1498 1556 1475 1645 1443 1672 1390 1654 1318 1620 1273 1590 1241 1634 1270 1694 1310 1738 1340 1774 1375 1830 1363 1885 1341 1960 1364 2050 1337 2140 1321 2200 1314 2275 1287 2179 1256 2171 1192 2206 1156 2209 1111 2178 1073 2205 1077 2270 1091 2316 1079 2370 1074 2425 1060 2475 1060 2535 1062 2588 1023 2607 994 2600 955 2627 910 2665 880 2642 847 2646 812 2640 801 2582 795 2477 770 2428 705 2466 676 2470 662 2416 614 2370 613 2312 623 2234 601 2202 607 2090 604 1984 563 1997 532 1960 507 1897 485 1857 465 1815 402 1803 367 1756 338 1688 320 1598 286 1617 246 1605 248 1520 221 1442 158 1408 90 1389 31 1361 12 1280 60 1262 99 1251 125 1168 116 1073 79 1000 83 923 128 933 169 926 167 855 170 766 197 703 201 645 230 592 262 534 264 373 273 305 320 268 360 235 397 218 450 161 511 182 575 170 645 134 691 85Z"/>
          <clipPath id="inside"><use href="#edge"/></clipPath>
          <filter id="soft" x="-60%" y="-60%" width="220%" height="220%" color-interpolation-filters="sRGB"><feGaussianBlur stdDeviation="14 20"/></filter>
          <filter id="wide" x="-80%" y="-80%" width="260%" height="260%" color-interpolation-filters="sRGB"><feGaussianBlur stdDeviation="50 70"/></filter>
          <filter id="ridge" x="-10%" y="-10%" width="120%" height="120%" color-interpolation-filters="sRGB"><feGaussianBlur stdDeviation="14 26" result="b"/><feTurbulence type="fractalNoise" baseFrequency=".035 .007" numOctaves="3" seed="4"/><feDisplacementMap in="b" scale="70" xChannelSelector="R" yChannelSelector="G" result="d"/><feGaussianBlur in="d" stdDeviation="4 8"/></filter>
          <filter id="stream" x="-10%" y="-10%" width="120%" height="120%" color-interpolation-filters="sRGB"><feTurbulence type="fractalNoise" baseFrequency=".025 .02" numOctaves="3" seed="9" result="n"/><feDisplacementMap in="SourceGraphic" in2="n" scale="34" xChannelSelector="R" yChannelSelector="G" result="d"/><feGaussianBlur in="d" stdDeviation="3.500 6"/></filter>
          <filter id="veins" x="0" y="0" width="100%" height="100%" color-interpolation-filters="sRGB"><feTurbulence type="fractalNoise" baseFrequency=".018 .003" numOctaves="4" seed="21"/><feColorMatrix values="0 0 0 0 .74  0 0 0 0 .54  0 0 0 0 .24  2.200 0 0 0 -.9"/></filter>
          <linearGradient id="fade" x1="0" y1="0" x2="0" y2="1"><stop offset="0" stop-color="#000"/><stop offset=".25" stop-color="#fff"/><stop offset=".6" stop-color="#aaa"/><stop offset="1" stop-color="#111"/></linearGradient>
          <mask id="veinmask"><rect y="420" width="1568" height="1700" fill="url(#fade)"/></mask>
          <linearGradient id="rise" gradientUnits="userSpaceOnUse" x1="0" y1="480" x2="0" y2="1350"><stop offset="0" stop-color="#555"/><stop offset=".4" stop-color="#999"/><stop offset="1" stop-color="#fff"/></linearGradient>
          <mask id="rivermask" maskUnits="userSpaceOnUse" x="0" y="0" width="1568" height="2720"><rect width="1568" height="2720" fill="url(#rise)"/></mask>
        </defs>
        <g transform="translate(35 1) scale(.574 .33333)">
          <use href="#edge" class="speck"/>
          <g clip-path="url(#inside)">
            <rect width="1568" height="2720" fill="url(#relief)"/>
            <g filter="url(#wide)">
              <ellipse cx="1350" cy="350" rx="90" ry="290" fill="#ecdfc3"/>
              <ellipse cx="1440" cy="1000" rx="80" ry="350" fill="#e1cb9a"/>
              <ellipse cx="220" cy="850" rx="80" ry="300" fill="#ebdfc1"/>
              <ellipse cx="340" cy="360" rx="80" ry="90" fill="#dbe3d2"/>
              <ellipse cx="1270" cy="1960" rx="160" ry="260" fill="#d4b06a"/>
              <ellipse cx="450" cy="1600" rx="130" ry="150" fill="#d9b876"/>
              <ellipse cx="660" cy="2330" rx="80" ry="130" fill="#b0702a"/>
              <ellipse cx="1000" cy="2270" rx="80" ry="60" fill="#c29049"/>
              <ellipse cx="800" cy="1850" rx="80" ry="150" fill="#bd883f"/>
              <ellipse cx="980" cy="1400" rx="170" ry="130" fill="#d8b774"/>
              <ellipse cx="1380" cy="1430" rx="60" ry="130" fill="#dabd7e"/>
            </g>
            <g filter="url(#ridge)">
              <path d="M910 470L1080 360 1220 340 1240 440 1310 500 1340 720 1290 700 1250 560 1120 560 1010 590 970 690 900 710 880 640Z" fill="#cbe5df"/>
              <path d="M930 250L1090 260 1190 260 1210 400 1100 410 1010 500 940 520Z" fill="#bde1da"/>
              <path d="M1120 500L1200 490 1210 640 1130 660Z" fill="#e0e3ce"/>
              <path d="M380 190L640 110 760 40 840 140 900 300 820 310 770 230 700 210 640 220 620 320 595 320 570 240 480 210 410 220 400 310 385 310Z" fill="#8ccdc0"/>
              <path d="M600 180L660 110 760 50 780 130 740 190 700 160 640 190Z" fill="#67bcad"/>
              <path d="M945 220L1070 270 1160 280 1175 340 1090 350 1050 420 965 510 1010 400 990 340Z" fill="#7cc6b8"/>
              <path d="M1045 270L1140 280 1080 340 1040 400Z" fill="#4bae9e"/>
              <path d="M1250 290L1340 250 1310 300 1260 340Z" fill="#d8e3d4"/>
              <path d="M940 810L980 730 1050 740 1010 790Z" fill="#e9e0c8"/>
              <path d="M700 780h40v50h-40z" fill="#e8d9b4"/>
              <path d="M1230 770L1290 700 1350 770Z" fill="#e7dbbd"/>
              <path d="M740 260L775 260 750 360 745 520 725 380Z" fill="#e2e1cc"/>
            </g>
            <g filter="url(#soft)">
              <path d="M0 1240L75 1240 80 1420 0 1420Z" fill="#d6e3d8"/>
              <path d="M80 1230h42v180h-42z" fill="#e9dfc6"/>
              <path d="M70 900L170 930 150 1080 110 1080 70 1000Z" fill="#cfe4dc"/>
              <ellipse cx="115" cy="935" rx="22" ry="18" fill="#a5d9d0"/>
              <ellipse cx="215" cy="680" rx="28" ry="70" fill="#d3e3d8"/>
              <ellipse cx="318" cy="1295" rx="26" ry="50" fill="#e8d9b6" fill-opacity=".85"/>
              <ellipse cx="345" cy="1340" rx="18" ry="45" fill="#e2cd9f" fill-opacity=".8"/>
              <ellipse cx="423" cy="1620" rx="12" ry="42" fill="#fff4e0"/>
              <ellipse cx="440" cy="1680" rx="14" ry="40" fill="#e2cb98" fill-opacity=".8"/>
              <ellipse cx="525" cy="1575" rx="10" ry="28" fill="#e4cc98" fill-opacity=".8"/>
              <ellipse cx="600" cy="1710" rx="11" ry="50" fill="#dfc382" fill-opacity=".8"/>
              <ellipse cx="540" cy="1830" rx="16" ry="40" fill="#d6b36c" fill-opacity=".7"/>
              <ellipse cx="596" cy="1840" rx="7" ry="26" fill="#dcbd79" fill-opacity=".8"/>
              <ellipse cx="612" cy="1490" rx="22" ry="50" fill="#dabb7b"/>
              <ellipse cx="1185" cy="2060" rx="9" ry="34" fill="#e8d09c" fill-opacity=".9"/>
              <ellipse cx="710" cy="2150" rx="8" ry="20" fill="#d3aa62"/>
              <ellipse cx="990" cy="2460" rx="8" ry="26" fill="#d8b26c"/>
              <ellipse cx="873" cy="2315" rx="6" ry="18" fill="#c8984f"/>
              <ellipse cx="800" cy="1900" rx="30" ry="90" fill="#b87c37" fill-opacity=".45"/>
            </g>
            <g mask="url(#veinmask)"><rect y="420" width="1568" height="1700" filter="url(#veins)" opacity=".2"/></g>
            <g class="valley" filter="url(#soft)">
              <path d="M757 1320L795 1425 768 1540 808 1660 835 1770 875 1805 865 1860 880 1960 858 2030 893 2090 862 2140 840 2260"/>
              <path d="M808 1660L910 1590 935 1545 1025 1570 1040 1620 1150 1600 1175 1550 1240 1510 1350 1570 1430 1590"/>
              <path d="M430 960L440 1140 550 1270 560 1390 690 1500 690 1640 640 1720 620 2000"/>
              <path d="M1090 960L1060 1050 1065 1180M1120 1010L1170 1200 1175 1550M1330 1060L1290 1130 1300 1250M620 900L620 1150M1490 1050L1510 1250"/>
            </g>
            <g mask="url(#rivermask)"><g class="rivers" filter="url(#stream)">
              <path class="big" d="M757 1320L760 1370 780 1400 795 1425 790 1480 768 1520 765 1560 780 1600 808 1660 812 1720 835 1770 875 1805 865 1860 880 1910 878 1960 855 2010 858 2030 880 2040 893 2090 885 2110 862 2130 860 2180"/>
              <path d="M808 1660L850 1620 910 1590 935 1545 912 1480 875 1450M912 1480L930 1440M935 1545L980 1570 1025 1570 1035 1620 1080 1630 1150 1600 1175 1550"/>
              <path class="thin" d="M1175 1550L1230 1510 1300 1515 1350 1570 1430 1590 1480 1585M975 1560L980 1480 965 1440M893 2060L920 2000M860 2180L850 2240 825 2280"/>
              <path class="thin" d="M1175 1550L1172 1470 1180 1330 1170 1200 1130 1100 1120 1010M1240 1510L1270 1400 1300 1250 1290 1130 1330 1060 1290 980M1330 1060L1380 1040 1400 980M757 1350L757 1290 728 1250 740 1190 790 1110 800 1040 790 960 720 900M1065 1180L1060 1050 1090 960 1090 860M1130 1270L1065 1180 1000 1140M1450 700L1460 760 1490 850M1480 1140L1490 1240 1510 1300M1380 1240L1370 1330M1060 1050L1020 1020"/>
              <path class="thin" d="M280 530L310 590 340 640 370 700 355 820 420 840 430 960 425 1080 440 1140 500 1220 550 1270 550 1370 600 1420 650 1480 690 1500 690 1600 680 1640 650 1720 630 1850 620 2000M330 540L320 600M270 730L355 790M220 880L300 900 400 920M550 1270L600 1180 620 1080M650 1430L660 1260M250 970L320 1060 340 1140M120 1230L180 1310M750 540L790 580 805 640 812 780M840 530L800 550M670 520L670 600 690 760M460 600L465 740M640 720L690 800M510 840L520 940M1175 1470L1110 1440M1440 1390L1470 1440 1455 1530"/>
            </g></g>
          </g>
          <use href="#edge" class="border"/>
        </g>
      </svg>
    </section>

    <div class="split rsplit"><i></i></div>

    <section class="styling">
      <div class="dtitle"><span>Layer Styling</span><svg class="db"><use href="#fl"/></svg><svg class="db"><use href="#cl"/></svg></div>
      <div class="combo top"><svg class="li"><use href="#rst"/></svg><span>clipped_reprojected_merged_SRTM_DEM</span></div>
      <div class="sbody">
        <div class="strip"><span class="act"><svg class="s"><use href="#i-brush"/></svg></span><svg class="s"><use href="#i-tr"/></svg><svg class="s"><use href="#i-hist"/></svg><svg class="s"><use href="#i-pyr"/></svg><svg class="s"><use href="#i-hst"/></svg></div>
        <div class="right">
          <div class="scroll">
            <div class="form">
              <div class="combo render"><svg class="rb" viewBox="0 0 12 12"><rect x=".7" y=".7" width="10.600" height="10.600" fill="url(#spec)" stroke="#555" stroke-width="1.300"/></svg><span>Singleband pseudocolor</span></div>
              <div class="row band-row"><label>Band</label><div class="combo">Band 1</div></div>
              <div class="row mm"><label>Min</label><div class="inp">2000</div><label class="mx">Max</label><div class="inp">3200</div></div>
              <div class="row head"><i class="tri"></i><b>Min / Max Value Settings</b></div>
              <div class="row wlab interp"><label>Interpolation</label><div class="combo">Linear</div></div>
              <div class="row wlab ramp"><label>Color ramp</label><div class="rampbox"><i></i></div><div class="rampdrop"><i class="drop"></i></div></div>
              <div class="row wlab"><label>Label unit suffix</label><div class="inp"></div></div>
              <div class="row wlab prec"><label>Label precision</label><div class="spin min"><span>0</span><svg class="clr"><use href="#clr"/></svg><i class="ud"></i></div></div>
              <div class="table">
                <div class="tmain">
                  <div class="th"><span>Value</span><span>Color</span><span>Label</span></div>
                  <div class="tr"><span>2000</span><i style="background:#a6611a"></i><em>2000</em></div>
                  <div class="tr"><span>2240</span><i style="background:#d3ae6a"></i><em>2240</em></div>
                  <div class="tr"><span>2480</span><i style="background:#ebe0c5"></i><em>2480</em></div>
                  <div class="tr"><span>2720</span><i style="background:#c6e5df"></i><em>2720</em></div>
                  <div class="tr"><span>2960</span><i style="background:#6abfb2"></i><em>2960</em></div>
                  <div class="tr"><span>3200</span><i style="background:#018571"></i><em>3200</em></div>
                </div>
                <div class="vs"><i class="vb up"></i><i class="vh"></i><i class="vt"></i><i class="vb dn"></i></div>
              </div>
              <div class="row mode"><label>Mode</label><div class="combo focus">Equal Interval</div><label class="cls">Classes</label><div class="spin"><span>6</span><svg class="clr"><use href="#clr"/></svg><i class="ud"></i></div></div>
              <div class="row btns"><button class="classify">Classify</button><button class="sq"><svg><use href="#i-padd"/></svg></button><button class="sq"><svg><use href="#i-pdel"/></svg></button><button class="sq"><svg><use href="#i-inv"/></svg></button><button class="sq"><svg><use href="#i-open"/></svg></button><button class="sq"><svg><use href="#i-sst"/></svg></button><button class="legset">Legend Settings...</button></div>
              <div class="row clip"><svg class="cb"></svg><span>Clip out of range values</span></div>
              <div class="row lr"><b>Layer Rendering</b></div>
              <div class="group">
                <div class="row bl"><label>Blending mode</label><div class="combo">Normal</div></div>
                <div class="row sl"><label>Brightness</label><div class="slider"><i class="fill" style="width:121px"></i><i class="knob"></i></div><div class="spin"><span>0</span><i class="ud"></i></div></div>
                <div class="row sl"><label>Saturation</label><div class="slider"><i class="fill" style="width:121px"></i><i class="knob"></i></div><div class="spin"><span>0</span><i class="ud"></i></div></div>
                <div class="row sl"><label>Contrast</label><div class="slider"><i class="fill" style="width:121px"></i><i class="knob"></i></div><div class="spin"><span>0</span><i class="ud"></i></div></div>
                <div class="row sl"><label>Gamma</label><div class="slider"><i class="fill" style="width:26px"></i><i class="knob"></i></div><div class="spin"><span>1.00</span><i class="ud"></i></div></div>
                <div class="row bl next"><label></label><div class="combo"></div></div>
              </div>
            </div>
            <div class="vs big"><i class="vb up"></i><i class="vh"></i><i class="vt"></i><i class="vb dn"></i></div>
          </div>
          <div class="apply"><button class="ub"><svg><use href="#i-undo"/></svg></button><button class="ub"><svg><use href="#i-redo"/></svg></button><span class="live"><svg class="cb"><use href="#ck"/></svg>Live update</span><button class="ap"><svg viewBox="0 0 16 18"><path d="M1 10l3-1 2 3.500L13 1l2 .500L7.500 16H5z" fill="#6f8f5c" stroke="#55713f"/></svg>Apply</button></div>
        </div>
      </div>
      <div class="tabs rtabs"><span class="tab on">Layer Styling</span><span class="tab">Processing Toolbox</span><span class="tab">Value Tool</span></div>
    </section>
  </main>

  <footer class="status">
    <div class="inp search"><svg viewBox="0 0 14 14"><circle cx="5.500" cy="5.500" r="4.300" fill="none" stroke="#999" stroke-width="1.400"/><path d="M8.700 8.700l4 4" stroke="#999" stroke-width="1.800"/></svg><span>clip</span><svg class="clr"><use href="#clr"/></svg></div>
    <label class="co">Coordinate</label><div class="inp coord">487455,1006217</div>
    <svg class="mouse" viewBox="0 0 18 18"><path d="M2 3l13 12M15 2l-4 5M1 9l5-1M4 15l4-2" stroke="#222" fill="none"/><ellipse cx="7.500" cy="6" rx="3.500" ry="5" transform="rotate(-25 7.500 6)" fill="#fff" stroke="#111" stroke-width="1.600"/><path d="M5 3l5 6" stroke="#111" stroke-width="1.500"/><ellipse cx="11" cy="12" rx="3.500" ry="4.500" transform="rotate(-20 11 12)" fill="#777" stroke="#111" stroke-width="1.800"/></svg>
    <label class="sc">Scale</label><div class="inp scale"><span>1:127428</span><i class="sd"><i class="drop"></i></i></div>
    <svg class="lock" viewBox="0 0 12 16"><path d="M3 8V4.500a3 3 0 016 0V8" fill="none" stroke="#8a8a8a" stroke-width="1.800"/><rect y="7.500" width="12" height="8" rx="1" fill="#5f5f5f"/></svg>
    <label class="ma">Magnifier</label><div class="spin mag"><span>100%</span><i class="ud"></i></div>
    <label class="ro">Rotation</label><div class="spin rot"><span>0.0 °</span><i class="ud"></i></div>
    <svg class="cb rcb"><use href="#ck"/></svg><label>Render</label>
    <svg class="crs" viewBox="0 0 16 16"><circle cx="8" cy="8" r="6.500" fill="#bbb" stroke="#777"/><path d="M0 8h16M8 0v16M2.500 4.500h11M2.500 11.500h11M5.500 2q-3 6 0 12M10.500 2q3 6 0 12" stroke="#666" fill="none"/></svg><label>EPSG:20137</label>
    <svg class="msg" viewBox="0 0 17 16"><ellipse cx="8.500" cy="7" rx="8" ry="6.500" fill="#5f5f5f"/><path d="M9 12l5 4-1-5z" fill="#5f5f5f"/><path d="M4 7h2M7.500 7h2M11 7h2" stroke="#fff" stroke-width="2"/></svg>
  </footer>
</div>
</body>
</html>
```
FILE: styles.css
```css
* { box-sizing: border-box; }
body { margin: 0; background: #efefef; font: 13px/16px "DejaVu Sans", sans-serif; color: #111; overflow: hidden; }
i { font-style: normal; display: block; flex: none; }
svg { display: block; flex: none; }
.defs { position: absolute; }
button { font: inherit; color: inherit; padding: 0; margin: 0; }
.window { width: 1922px; height: 1082px; border: 1px solid #9b9b9b; border-top-color: #999f9f; display: flex; flex-direction: column; }

.titlebar { height: 37px; background: #363636; border-bottom: 1px solid #222; display: flex; align-items: center; justify-content: center; position: relative; flex: none; }
.wtitle { font: bold 12px "Noto Sans", sans-serif; letter-spacing: .12px; color: #f1f1f1; }
.wbtns { position: absolute; right: 8px; top: 8px; display: flex; align-items: center; height: 20px; }
.wmin { width: 8px; height: 2px; background: #fff; margin: 4px 27px 0 0; }
.wmax { width: 6px; height: 6px; border: 2px solid #fff; margin-right: 22px; }
.wclose { width: 20px; height: 20px; }

.menu { height: 22px; display: flex; gap: 15.07px; padding-left: 10px; align-items: center; border-bottom: 1px solid #cfcfcf; flex: none; color: #000; }
.menu span { white-space: nowrap; }
.menu u { text-underline-offset: 2px; }

.toolbar { height: 39px; display: flex; align-items: center; background: linear-gradient(#fafafa, #ececec); border-bottom: 1px solid #b4b4b4; flex: none; font-family: "DejaVu Sans", sans-serif; }
.t { width: 33px; height: 24px; padding: 0 4.5px; }
.off { opacity: .34; filter: saturate(.4); }
.pressed { width: 33px; height: 31px; display: flex; align-items: center; border: 1px solid #b3b3b3; border-radius: 3px; background: #dcdcdc; }
.pressed .t { width: 31px; padding: 0 3.5px; }
.grip { width: 16px; height: 20px; background: conic-gradient(#c2c2c2 25%, transparent 0) 0 0 / 3px 3px; background-clip: content-box; padding: 1px 4px 1px 8px; }
.grip.wider { width: 17px; padding-right: 5px; }
.grip.first { width: 11.500px; padding: 1px 3px 1px 5px; }
.drop { width: 12px; height: 5px; background: #555; clip-path: polygon(2px 0, 10px 0, 6px 5px); }
.vsep { width: 7px; height: 28px; border-left: 1px solid #c8c8c8; background: linear-gradient(90deg, #fff 1px, transparent 1px); margin-left: 2px; margin-right: -2px; }

.body { height: 912px; display: flex; flex: none; }
.vbar { width: 51px; background: linear-gradient(90deg, #fafafa, #ececec); border-right: 1px solid #b4b4b4; padding-top: 5px; flex: none; }
.hgrip { width: 17px; height: 5px; margin: 0 0 0 18px; background: conic-gradient(#c2c2c2 25%, transparent 0) 0 0 / 3px 3px; }
.vgroup { padding: 2px 0 0 8px; height: 217px; }
.vgroup.wide { padding: 2px 0 0 14px; }
.vgroup > .v, .vgroup > .vd { height: 24px; margin: 4px 0 8px; }
.v { width: 24px; height: 24px; }
.hsep { width: 32px; height: 2px; background: #d6d6d6; margin: 2px 0 5px -4px; border-bottom: 1px solid #fff; }
.vd { display: flex; align-items: center; }
.vd .drop { margin-left: 4px; }

.layers { width: 366px; display: flex; flex-direction: column; padding: 0 0 0 1px; flex: none; }
.dtitle { height: 22px; display: flex; align-items: center; padding: 0 1px 2px 4px; gap: 2px; flex: none; }
.dtitle span { flex: 1; }
.db { width: 12px; height: 12px; }
.ltools { height: 28px; display: flex; align-items: center; padding: 0 0 4px 4px; flex: none; }
.lpress { width: 24px; height: 23px; border: 1px solid #bbb; background: #dcdcdc; border-radius: 3px; display: flex; align-items: center; justify-content: center; }
.ltools .l { width: 25.500px; height: 17px; }
.ltools .lpress .l { width: 20px; height: 18px; }
.ltools .drop { width: 10px; clip-path: polygon(1px 0, 9px 0, 5px 5px); }
.tree { height: 833px; width: 365px; border: 1px solid #b4b4b4; background: #fff; display: flex; flex-direction: column; flex: none; }
.items { flex: 1; overflow: hidden; }
.it { height: 19px; display: flex; align-items: center; padding-left: 6px; white-space: nowrap; color: #000; }
.it.sub { padding-left: 26px; }
.ar { width: 8px; height: 10px; background: #555; clip-path: polygon(2px 1px, 7px 5px, 2px 9px); }
.ar.down { clip-path: polygon(0 3px, 8px 3px, 4px 8px); }
.ar.none { visibility: hidden; }
.cb { width: 14px; height: 14px; border: 1px solid #b9b9b9; background: #fff; }
.it .cb { margin-left: 9px; }
.li { width: 13px; height: 13px; }
.it .li { margin: 0 7px 0 8px; }
.it.sub .li { margin: 0 6px 0 9px; }
.sw { width: 16px; height: 16px; border: 1px solid #f58d2b; margin: 0 6px; }
.gone { font-style: italic; color: #888; }
.selected { background: #308cc6; position: relative; color: #fff; }
.selected .ar { background: #1d4567; }
.selected b { border-bottom: 1px solid #fff; line-height: 15px; }
.selected .li { opacity: .75; }
.chip { position: absolute; right: 5px; top: 1px; width: 17px; height: 17px; }
.band { height: 18px; padding: 1px 0 0 63px; }
.legend { display: flex; height: 97px; padding-left: 63px; gap: 8px; }
.legend i { width: 16px; height: 96px; background: linear-gradient(#018571, #6abfb2 20%, #c6e5df 40%, #ebe0c5 60%, #d3ae6a 80%, #a6611a); }
.legend div { display: flex; flex-direction: column; justify-content: space-between; padding: 1px 0; }
.hscroll { height: 15px; border-top: 1px solid #b4b4b4; display: flex; }
.hb { width: 14px; background: #555; clip-path: polygon(5px 7px, 9px 3px, 9px 11px); }
.hb.right { clip-path: polygon(9px 7px, 5px 3px, 5px 11px); }
.hs { width: 318px; border: solid #b4b4b4; border-width: 0 1px; background: linear-gradient(#fdfdfd, #f0f0f0); }
.ht { flex: 1; background: #e4e4e4; border-right: 1px solid #b4b4b4; }

.tabs { display: flex; align-items: flex-start; border-top: 1px solid #b4b4b4; }
.ltabs { margin-top: 1px; width: 365px; }
.tab { height: 25px; line-height: 24px; background: #dcdcdc; border: 1px solid #b4b4b4; border-top: 0; border-left: 0; border-radius: 0 0 3px 3px; text-align: center; }
.tab.on { height: 27px; line-height: 27px; background: #f4f4f4; border-left: 1px solid #b4b4b4; margin-top: -1px; }
.ltabs .tab { width: 77px; }
.ltabs .tab.on { width: 68px; }
.rtabs .tab { width: 91px; }
.rtabs .tab:nth-child(2) { width: 150px; }
.rtabs .tab.on { width: 110px; }

.split { width: 6px; display: flex; align-items: center; justify-content: center; flex: none; }
.rsplit { width: 5px; }
.split i { width: 1px; height: 17px; background: repeating-linear-gradient(#bbb 0 1px, transparent 1px 3px); }
.canvas { width: 955px; height: 912px; border: 1px solid #b4b4b4; background: #fff; flex: none; }
.map { width: 953px; height: 910px; }
.border { fill: none; stroke: #ff8200; stroke-width: 2.4px; vector-effect: non-scaling-stroke; stroke-linejoin: round; }
.speck { fill: none; stroke: #1a0a08; stroke-width: 4.2px; stroke-dasharray: 2 15 1 9 2 22; vector-effect: non-scaling-stroke; }
.valley { fill: none; stroke: #bf8a42; stroke-width: 36; stroke-opacity: .4; }
.rivers { fill: none; stroke: #b47730; stroke-width: 11; stroke-opacity: .5; stroke-linejoin: round; }
.rivers .big { stroke: #a9671f; stroke-width: 12; stroke-opacity: .58; }
.rivers .thin { stroke: #bb8a3e; stroke-width: 11; stroke-opacity: .36; }

.styling { flex: 1; display: flex; flex-direction: column; }
.styling .dtitle { padding: 0 2px 2px 6px; }
.rtabs { margin-left: 1px; margin-top: 4px; }
.combo { height: 25px; border: 1px solid #b0b0b0; border-radius: 3px; background: linear-gradient(#fefefe, #ebebeb); display: flex; align-items: center; padding: 0 0 0 5px; white-space: nowrap; flex: 1; }
.combo::after { content: ""; margin-left: auto; margin-right: 5px; width: 12px; height: 5px; background: #555; clip-path: polygon(2.500px 0, 9.500px 0, 6px 5px); }
.combo.top { margin: 0 3px 0 4px; flex: none; padding-left: 6px; gap: 5px; }
.sbody { display: flex; height: 827px; margin-top: 6px; padding-left: 4px; }
.strip { width: 38px; background: #5d5d5d; flex: none; }
.act { display: block; height: 32px; background: #efefef; padding-top: 4px; }
.s { width: 22px; height: 22px; margin: 7px 0 10px 4px; }
.act + .s { margin-top: 4px; }
.act .s { width: 24px; height: 24px; margin: 0 0 0 6px; }
.right { flex: 1; display: flex; flex-direction: column; }
.scroll { display: flex; height: 796px; overflow: hidden; }
.form { width: 478px; padding-left: 6px; flex: none; overflow: hidden; }
.row { display: flex; align-items: center; width: 469px; height: 25px; white-space: nowrap; }
.render { margin-left: -3px; width: 475px; padding-left: 7px; gap: 6px; }
.rb { width: 12px; height: 12px; }
.band-row { margin-top: 9px; }
.band-row label, .mm label { width: 90px; flex: none; }
.mm { margin-top: 6px; }
.mm .mx { width: 88px; margin-left: 7px; }
.inp { height: 25px; flex: 1; border: 1px solid #b0b0b0; border-radius: 3px; background: #fff; padding-left: 2px; display: flex; align-items: center; }
.mm .inp { flex: 0 0 142px; }
.head { height: 20px; margin-top: 6px; }
.tri { width: 7px; height: 11px; background: #444; clip-path: polygon(0 0, 100% 50%, 0 100%); margin: 0 11px 0 5px; }
.wlab { margin-top: 6px; }
.wlab label { width: 160px; flex: none; }
.interp { margin-top: 9px; }
.ramp { height: 28px; }
.ramp label { padding-top: 1px; }
.rampbox { flex: 1; height: 28px; border: 1px solid #b0b0b0; border-radius: 3px; background: linear-gradient(#fefefe, #ebebeb); padding: 5px 4px; }
.rampbox i { height: 16px; background: linear-gradient(90deg, #a6611a, #dfc27d 25%, #f5f5f5 50%, #80cdc1 75%, #018571); }
.rampdrop { width: 12px; height: 28px; border: 1px solid #b0b0b0; border-radius: 3px; display: flex; align-items: center; justify-content: center; background: linear-gradient(#fefefe, #ebebeb); }
.prec { margin-top: 8px; height: 24px; }
.spin { height: 24px; flex: 1; border: 1px solid #b0b0b0; border-radius: 3px; background: #fff; display: flex; align-items: center; padding-left: 4px; }
.spin span { flex: 1; }
.clr { width: 14px; height: 12px; margin-right: 10px; }
.ud { width: 14px; height: 100%; border-left: 1px solid #b0b0b0; background: #f6f6f6; display: flex; flex-direction: column; justify-content: center; align-items: center; gap: 5px; }
.ud::before, .ud::after { content: ""; width: 8px; height: 4px; background: #555; clip-path: polygon(0 100%, 50% 0, 100% 100%); }
.ud::after { clip-path: polygon(0 0, 50% 100%, 100% 0); }
.min .ud::before { background: #aaa; }
.table { margin-top: 6px; width: 469px; height: 250px; border: 1px solid #b4b4b4; background: #fff; display: flex; }
.tmain { flex: 1; overflow: hidden; }
.th { display: flex; height: 21px; background: linear-gradient(#fcfcfc, #ededed); border-bottom: 1px solid #b4b4b4; align-items: center; margin-bottom: 1px; }
.th span { height: 20px; line-height: 21px; padding-left: 2px; border-right: 1px solid #ccc; width: 100px; }
.th span:nth-child(2) { width: 59px; }
.th span:nth-child(3) { border: 0; }
.tr { height: 38px; display: flex; align-items: center; color: #000; }
.tr span { width: 111px; padding-left: 23px; }
.tr i { width: 36px; height: 36px; border-radius: 6px; }
.tr em { font-style: normal; color: #aaa; margin-left: 15px; }
.vs { width: 14px; border-left: 1px solid #b4b4b4; display: flex; flex-direction: column; background: #fbfbfb; flex: none; }
.vb { height: 13px; background: #555; clip-path: polygon(3px 9px, 6.500px 4px, 10px 9px); }
.vb.dn { clip-path: polygon(3px 4px, 6.500px 9px, 10px 4px); }
.vh { height: 185px; border: solid #b4b4b4; border-width: 1px 0; background: linear-gradient(90deg, #fff, #f1f1f1); }
.vt { flex: 1; background: #e4e4e4; border-bottom: 1px solid #b4b4b4; }
.vs.big { width: 14px; }
.big .vh { height: 561px; }
.mode { margin-top: 6px; }
.mode label { width: 42px; }
.mode .combo { flex: 0 0 118px; }
.focus { border-color: #2d6f9e; }
.mode .focus::after { margin-right: 4px; }
.mode .cls { margin-left: auto; width: 55px; }
.mode .spin { flex: 0 0 78px; }
button { border: 1px solid #b0b0b0; border-radius: 3px; background: linear-gradient(#fefefe, #ebebeb); display: flex; align-items: center; justify-content: center; white-space: nowrap; }
.btns { margin-top: 8px; height: 26px; gap: 6px; }
.btns button { height: 26px; }
.btns .classify { width: 80px; }
.btns .sq { width: 28px; height: 25px; }
.sq svg { width: 16px; height: 16px; }
.btns .legset { width: 127px; margin-left: auto; }
.clip { height: 18px; margin-top: 10px; gap: 5px; }
.lr { height: 20px; margin-top: 12px; }
.group { width: 474px; margin-left: -2px; height: 200px; border: 1px solid #d3d3d3; background: #ebebeb; border-radius: 3px; padding: 10px 0 0 10px; }
.group .row { width: 452px; }
.bl label { width: 105px; flex: none; }
.bl.next { margin-top: 7px; }
.sl { height: 23px; margin-top: 8px; }
.bl + .sl { margin-top: 7px; }
.sl label { width: 106px; flex: none; }
.slider { width: 244px; height: 5px; border: 1px solid #a9a9a9; border-radius: 2px; background: #dedede; display: flex; align-items: center; margin-right: 7px; flex: none; }
.fill { height: 5px; background: #45a4e4; border: 1px solid #1f6ba3; border-radius: 2px; margin-left: -1px; }
.knob { width: 13px; height: 13px; border: 1px solid #adadad; border-radius: 3px; background: linear-gradient(#fff, #f0f0f0); margin-left: -5px; }
.sl .spin { height: 23px; }
.apply { display: flex; padding: 6px 3px 0 3px; align-items: center; height: 31px; }
.ub { width: 24px; height: 24px; margin-right: 6px; }
.ub svg { width: 14px; height: 14px; }
.live { display: flex; gap: 5px; align-items: center; margin-left: auto; margin-right: 13px; }
.ap { width: 80px; height: 26px; }
.ap svg { width: 15px; height: 17px; margin-right: 1px; }

.status { flex: 1; display: flex; align-items: center; font-size: 11px; padding: 0 7px 0 4px; white-space: nowrap; }
.status .inp, .status .spin { flex: none; }
.search { width: 270px; font-size: 13px; padding-left: 8px; gap: 8px; }
.search svg { width: 13px; height: 13px; }
.search span { flex: 1; }
.search .clr { margin-right: 7px; width: 14px; height: 12px; }
.co { width: 64px; margin-left: 751px; }
.coord { width: 111px; height: 23px; padding-left: 7px; }
.mouse { width: 18px; height: 18px; margin: 0 12px 0 3px; }
.sc { width: 33px; }
.scale { width: 97px; padding-left: 3px; }
.scale span { flex: 1; }
.sd { width: 20px; height: 23px; border-left: 1px solid #b0b0b0; background: #f1f1f1; display: flex; align-items: center; justify-content: center; }
.lock { width: 12px; height: 16px; margin: 0 9px 0 12px; }
.ma { width: 55px; }
.mag { width: 98px; margin-right: 10px; }
.ro { width: 55px; }
.rot { width: 94px; }
.rcb { margin: 0 5px 0 6px; }
.crs { width: 16px; height: 16px; margin: 0 2px 0 15px; }
.msg { width: 17px; height: 16px; margin-left: auto; }
```
